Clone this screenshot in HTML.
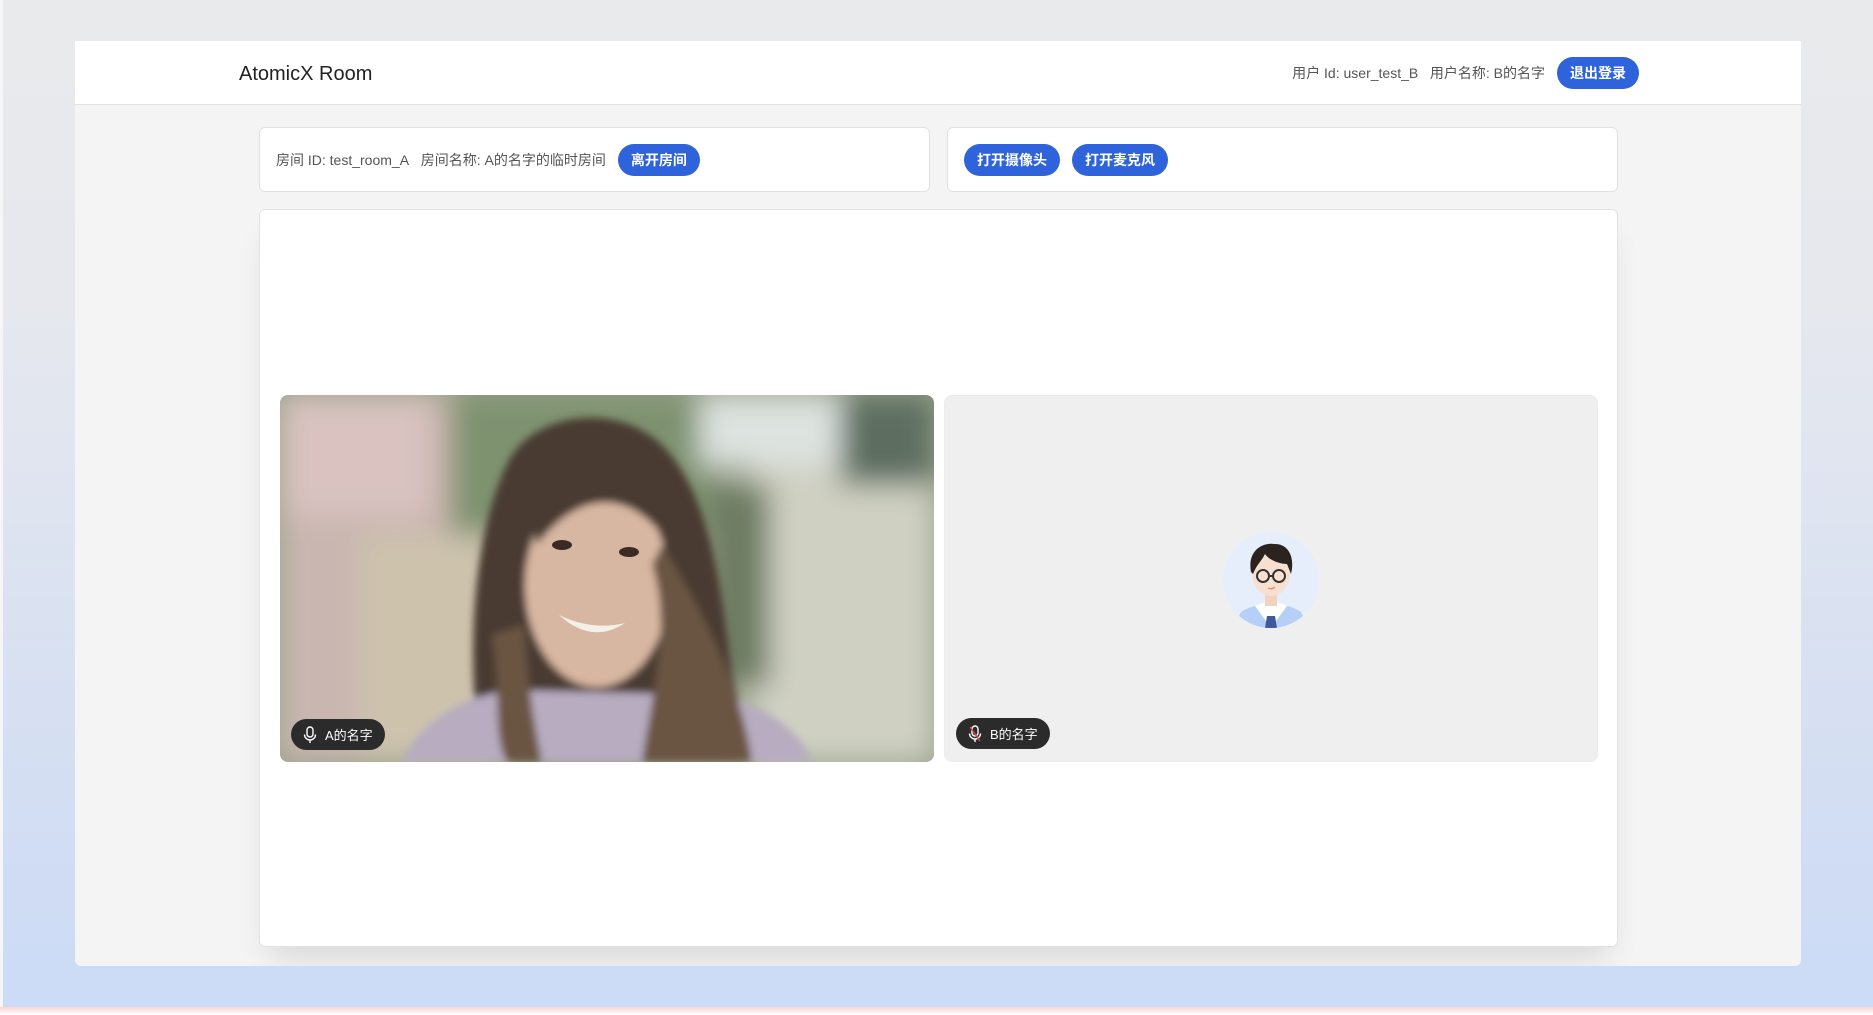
<!DOCTYPE html>
<html><head><meta charset="utf-8"><style>
*{margin:0;padding:0;box-sizing:border-box}
body{width:1873px;height:1015px;overflow:hidden;font-family:"Liberation Sans","Noto Sans CJK SC",sans-serif;background:linear-gradient(#e9eaec 0px,#e6e8ee 300px,#cfdcf4 900px,#cbdcf7 1008px);position:relative}
.edge{position:absolute;left:0;top:0;width:3px;height:1015px;background:#f6f6f8}
.pink{position:absolute;left:0;top:1007px;width:1873px;height:8px;background:linear-gradient(#fbd5d5,#fff)}
.win{position:absolute;left:75px;top:41px;width:1726px;height:925px;background:#f4f4f4;border-radius:0 0 6px 6px;overflow:hidden}
.hdr{height:64px;background:#fff;border-bottom:1px solid #e2e2e2;position:relative}
.title{position:absolute;left:164px;top:22px;font-size:20px;color:#222}
.user{position:absolute;right:162px;top:16px;display:flex;align-items:center;font-size:14px;color:#555}
.btn{display:inline-block;background:#2f63dc;color:#fff;border-radius:17px;font-size:14px;font-weight:bold;height:32px;line-height:32px;padding:0 13px;margin-left:12px}
.card{position:absolute;background:#fff;border:1px solid #e2e2e2;border-radius:6px;display:flex;align-items:center;font-size:14px;color:#555}
.tile{position:absolute;top:352px;width:654px;height:367px;border-radius:8px;overflow:hidden}
.pill{position:absolute;left:11px;bottom:12px;height:31px;border-radius:16px;background:#2b2b2b;color:#fff;font-size:13px;display:flex;align-items:center;padding:0 12px 0 12px}
.pill svg{margin-right:8px}
</style></head><body>
<div class="edge"></div>
<div class="win">
 <div class="hdr"><div class="title">AtomicX Room</div>
  <div class="user"><span>用户 Id: user_test_B&nbsp;&nbsp;&nbsp;用户名称: B的名字</span><span class="btn">退出登录</span></div></div>
 <div class="card" style="left:184px;top:86px;width:671px;height:65px;padding-left:16px"><span>房间 ID: test_room_A&nbsp;&nbsp;&nbsp;房间名称: A的名字的临时房间</span><span class="btn">离开房间</span></div>
 <div class="card" style="left:872px;top:86px;width:671px;height:65px;padding-left:4px"><span class="btn">打开摄像头</span><span class="btn">打开麦克风</span></div>
 <div class="card" style="left:184px;top:168px;width:1359px;height:738px;display:block;box-shadow:0 20px 30px -10px rgba(0,0,0,0.12)">
  <div class="tile" style="left:20px;top:185px">
   <svg width="654" height="367" viewBox="0 0 654 367">
    <defs><filter id="b"><feGaussianBlur stdDeviation="14"/></filter><filter id="b2"><feGaussianBlur stdDeviation="4"/></filter></defs>
    <rect width="654" height="367" fill="#9aa38c"/>
    <g filter="url(#b)">
     <rect x="0" y="0" width="200" height="367" fill="#c9b6b0"/>
     <rect x="0" y="0" width="150" height="120" fill="#d9c2c0"/>
     <rect x="170" y="0" width="260" height="140" fill="#7e9270"/>
     <rect x="80" y="140" width="140" height="227" fill="#cdc3ad"/>
     <rect x="420" y="0" width="140" height="70" fill="#dde3e0"/>
     <rect x="470" y="70" width="184" height="297" fill="#cfd0c2"/>
     <rect x="560" y="0" width="94" height="90" fill="#5d6e60"/>
     <rect x="430" y="90" width="60" height="200" fill="#6d7b62"/>
    </g>
    <g filter="url(#b2)" transform="translate(12,0)">
     <path d="M190 367 C170 250 185 120 220 60 C250 15 330 10 370 50 C420 100 430 200 440 280 C450 330 470 367 470 367Z" fill="#4a3b33"/>
     <path d="M110 367 C130 320 180 300 220 295 L420 300 C480 310 510 340 520 367Z" fill="#b7acc0"/>
     <ellipse cx="305" cy="190" rx="72" ry="102" fill="#d8b7a2"/>
     <path d="M240 120 C250 70 330 60 380 110 L370 140 C340 100 290 90 245 150Z" fill="#4a3b33"/>
     <path d="M360 170 C380 230 360 300 350 367 L460 367 C450 300 420 230 370 150Z" fill="#6a5443"/>
     <path d="M200 240 C210 300 200 340 215 367 L250 367 C240 320 235 280 232 230Z" fill="#6a5443"/>
    </g>
    <g transform="translate(12,0)">
    <ellipse cx="270" cy="150" rx="10" ry="5" fill="#3b2b25"/>
    <ellipse cx="337" cy="157" rx="10" ry="5" fill="#3b2b25"/>
    <path d="M267 220 Q300 250 333 228 Q300 236 267 220Z" fill="#f4efe9"/>
    </g>
   </svg>
   <div class="pill"><svg width="14" height="18" viewBox="0 0 14 18" fill="none" stroke="#fff" stroke-width="1.4"><rect x="4" y="1" width="6" height="10" rx="3"/><path d="M1.5 8.5a5.5 5.5 0 0 0 11 0M7 14v3"/></svg>A的名字</div>
  </div>
  <div class="tile" style="left:684px;top:185px;background:#efefef;border:1px solid #ececec">
   <svg style="position:absolute;left:278px;top:136px" width="96" height="96" viewBox="0 0 96 96">
    <defs><clipPath id="c"><circle cx="48" cy="48" r="48"/></clipPath></defs>
    <circle cx="48" cy="48" r="48" fill="#e6eefc"/>
    <g clip-path="url(#c)">
     <path d="M10 96 L18 80 Q30 72 48 72 Q66 72 78 80 L86 96Z" fill="#b5cff6"/>
     <path d="M32 74 L48 96 L64 74 Q56 70 48 70 Q40 70 32 74Z" fill="#fff"/>
     <path d="M44 84 L52 84 L54 96 L42 96Z" fill="#3f5a9a"/>
     <rect x="42" y="56" width="12" height="18" fill="#f3d3bf"/>
     <ellipse cx="48" cy="42" rx="19" ry="22" fill="#f8e0d0"/>
     <path d="M28 40 C24 18 40 10 52 12 C66 12 72 26 68 42 L64 32 C56 32 46 28 42 22 C38 30 34 32 30 42Z" fill="#2b2320"/>
     <circle cx="40" cy="44" r="6" fill="none" stroke="#333" stroke-width="2"/>
     <circle cx="56" cy="44" r="6" fill="none" stroke="#333" stroke-width="2"/>
     <path d="M46 44h4" stroke="#333" stroke-width="2"/>
     <path d="M45 56 Q49 58 52 55" stroke="#e38c7f" stroke-width="1.5" fill="none"/>
    </g>
   </svg>
   <div class="pill"><svg width="14" height="18" viewBox="0 0 14 18" fill="none" stroke="#fff" stroke-width="1.4"><rect x="4" y="1" width="6" height="10" rx="3"/><path d="M1.5 8.5a5.5 5.5 0 0 0 11 0M7 14v3"/><path d="M2 2 L12 16" stroke="#e04848"/></svg>B的名字</div>
  </div>
 </div>
</div>
<div class="pink"></div>
</body></html>
